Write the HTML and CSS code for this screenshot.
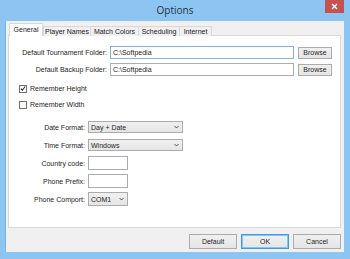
FILE: index.html
```html
<!DOCTYPE html>
<html>
<head>
<meta charset="utf-8">
<link rel="stylesheet" href="styles.css">
</head>
<body>
<div class="window">
  <div class="titlebar">
    <span class="title">Options</span>
    <div class="close"><svg width="7" height="7" viewBox="0 0 7 7"><path d="M1 1L6 6M6 1L1 6" stroke="#fff" stroke-width="1.4"/></svg></div>
  </div>
  <div class="client">
    <div class="tabs">
      <div class="tab active t-general">General</div>
      <div class="tab t-names">Player Names</div>
      <div class="tab t-colors">Match Colors</div>
      <div class="tab t-sched">Scheduling</div>
      <div class="tab t-net">Internet</div>
    </div>
    <div class="panel">
      <div class="folder-row">
        <span class="flabel">Default Tournament Folder:</span>
        <div class="input wide focus">C:\Softpedia</div>
        <div class="btn browse">Browse</div>
      </div>
      <div class="folder-row second">
        <span class="flabel">Default Backup Folder:</span>
        <div class="input wide">C:\Softpedia</div>
        <div class="btn browse">Browse</div>
      </div>
      <div class="check first-check">
        <span class="box"><svg width="7" height="7" viewBox="0 0 7 7"><path d="M1 3.6L2.8 5.5L6 1.2" fill="none" stroke="#222" stroke-width="1.2"/></svg></span>
        <span>Remember Height</span>
      </div>
      <div class="check">
        <span class="box"></span>
        <span>Remember Width</span>
      </div>
      <div class="form">
        <span class="label">Date Format:</span>
        <div class="select long"><span>Day + Date</span><span class="arrow"><svg width="5" height="4" viewBox="0 0 5 4"><path d="M0.5 1L2.5 3L4.5 1" fill="none" stroke="#444" stroke-width="0.9"/></svg></span></div>
        <span class="label">Time Format:</span>
        <div class="select long"><span>Windows</span><span class="arrow"><svg width="5" height="4" viewBox="0 0 5 4"><path d="M0.5 1L2.5 3L4.5 1" fill="none" stroke="#444" stroke-width="0.9"/></svg></span></div>
        <span class="label">Country code:</span>
        <div class="input short"></div>
        <span class="label">Phone Prefix:</span>
        <div class="input short"></div>
        <span class="label">Phone Comport:</span>
        <div class="select short tall"><span>COM1</span><span class="arrow"><svg width="5" height="4" viewBox="0 0 5 4"><path d="M0.5 1L2.5 3L4.5 1" fill="none" stroke="#444" stroke-width="0.9"/></svg></span></div>
      </div>
    </div>
    <div class="buttons">
      <div class="btn big">Default</div>
      <div class="btn big ok">OK</div>
      <div class="btn big">Cancel</div>
    </div>
  </div>
</div>
</body>
</html>
```
FILE: styles.css
```css
html, body {
  margin: 0;
  padding: 0;
}
body {
  width: 350px;
  height: 259px;
  overflow: hidden;
  font-family: "Liberation Sans", Arial, sans-serif;
  font-size: 7px;
  color: #1e1e1e;
}
.window {
  width: 350px;
  height: 259px;
  box-sizing: border-box;
  background: #8cc5f2;
  display: flex;
  flex-direction: column;
}
.titlebar {
  height: 21px;
  position: relative;
  display: flex;
  justify-content: center;
  align-items: center;
}
.title {
  font-family: "Open Sans", "Noto Sans", sans-serif;
  font-size: 10px;
  color: #24323f;
  margin-top: -1px;
}
.close {
  position: absolute;
  right: 6px;
  top: 0;
  width: 19px;
  height: 13px;
  background: #c75050;
  display: flex;
  align-items: center;
  justify-content: center;
}
.client {
  flex: 1;
  margin: 0 6px 7px 5px;
  background: #f0f0f0;
  border-left: 1px solid #7cb3e0;
  display: flex;
  flex-direction: column;
  padding: 2px 3px 0 2px;
}
.tabs {
  display: flex;
  align-items: flex-end;
  height: 13px;
  padding-left: 1px;
  position: relative;
  z-index: 1;
}
.tab {
  box-sizing: border-box;
  height: 10px;
  line-height: 9px;
  text-align: center;
  border: 1px solid #d9d9d9;
  border-bottom: none;
  background: #f0f0f0;
  color: #222;
}
.tab.active {
  height: 13px;
  line-height: 12px;
  background: #fff;
}
.t-general { width: 34px; }
.t-names { width: 48px; }
.t-colors { width: 49px; margin-left: -1px; }
.t-sched { width: 42px; margin-left: -1px; }
.t-net { width: 33px; margin-left: -1px; }
.panel {
  height: 193px;
  box-sizing: border-box;
  background: #fff;
  border: 1px solid #d9d9d9;
  margin-top: -1px;
  padding: 10px 0 0 0;
}
.folder-row {
  display: flex;
  align-items: center;
  height: 13px;
}
.folder-row.second {
  margin-top: 4px;
}
.flabel {
  width: 98px;
  text-align: right;
  margin-right: 3px;
}
.input {
  box-sizing: border-box;
  background: #fff;
  border: 1px solid #abadb3;
  height: 13px;
  line-height: 11px;
  padding-left: 2px;
}
.input.wide {
  width: 184px;
}
.input.focus {
  border-color: #7eb4ea;
}
.btn {
  box-sizing: border-box;
  border: 1px solid #acacac;
  background: linear-gradient(#f0f0f0, #e5e5e5);
  display: flex;
  align-items: center;
  justify-content: center;
}
.browse {
  width: 34px;
  height: 12px;
  margin-left: 4px;
}
.check {
  display: flex;
  align-items: center;
  margin-left: 10px;
  height: 9px;
  margin-top: 7px;
  gap: 3px;
}
.first-check {
  margin-top: 8px;
}
.box {
  box-sizing: border-box;
  width: 8px;
  height: 8px;
  border: 1px solid #707070;
  background: #fff;
  display: flex;
  align-items: center;
  justify-content: center;
}
.form {
  display: grid;
  grid-template-columns: 76px auto;
  grid-auto-rows: 18px;
  column-gap: 3px;
  margin-top: 9px;
  align-items: center;
}
.label {
  text-align: right;
}
.select {
  box-sizing: border-box;
  height: 12px;
  border: 1px solid #acacac;
  background: linear-gradient(#f0f0f0, #e5e5e5);
  display: flex;
  align-items: center;
  justify-content: space-between;
  padding: 0 3px 0 2px;
}
.select.long {
  width: 95px;
}
.short {
  width: 40px;
}
.input.short {
  height: 14px;
}
.select.tall {
  height: 14px;
}
.arrow {
  display: flex;
}
.buttons {
  display: flex;
  justify-content: flex-end;
  gap: 4px;
  margin-top: 6px;
}
.btn.big {
  width: 48px;
  height: 15px;
}
.btn.ok {
  border-color: #3c9ce8;
  box-shadow: inset 0 0 0 1px #8ec2ee;
}
```
